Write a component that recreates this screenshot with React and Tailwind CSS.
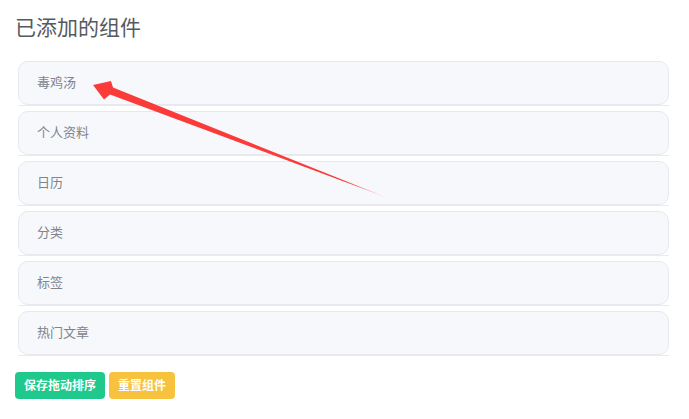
import React from 'react';

const widgets = ['毒鸡汤', '个人资料', '日历', '分类', '标签', '热门文章'];

export default function App() {
  return (
    <div
      className="relative w-[689px] h-[419px] bg-white pl-[15px] pr-[20px] pt-[13px]"
      style={{ fontFamily: '"Liberation Sans", "Noto Sans CJK SC", sans-serif' }}
    >
      <h2 className="text-[21px] leading-[29px] text-[#555a62] mb-[19px]">已添加的组件</h2>

      <ul className="pl-[3px]">
        {widgets.map((name) => (
          <li key={name} className="border-b border-[#e9ebf0] mb-[5px]">
            <div className="h-[44px] flex items-center rounded-[10px] border border-[#e6e8ef] bg-[#f7f8fc] px-[18px] text-[13px] text-[#80848c]">
              {name}
            </div>
          </li>
        ))}
      </ul>

      <div className="flex gap-[4px] mt-[16px]">
        <button type="button" className="h-[27px] px-[9px] rounded-[4px] bg-[#1ec98b] text-white text-[12px] font-bold">
          保存拖动排序
        </button>
        <button type="button" className="h-[27px] px-[9px] rounded-[4px] bg-[#f7c23d] text-white text-[12px] font-bold">
          重置组件
        </button>
      </div>

      <svg className="absolute left-0 top-0 pointer-events-none" width="689" height="419" viewBox="0 0 689 419">
        <defs>
          <linearGradient id="fade" x1="93" y1="85" x2="388" y2="198" gradientUnits="userSpaceOnUse">
            <stop offset="0" stopColor="#fb3a3a" />
            <stop offset="0.85" stopColor="#fb3a3a" />
            <stop offset="1" stopColor="#fb3a3a" stopOpacity="0.2" />
          </linearGradient>
        </defs>
        <polygon
          points="93,85 111,81 113,87.5 388,198 110,94.5 104,99.5"
          fill="url(#fade)"
        />
      </svg>
    </div>
  );
}
